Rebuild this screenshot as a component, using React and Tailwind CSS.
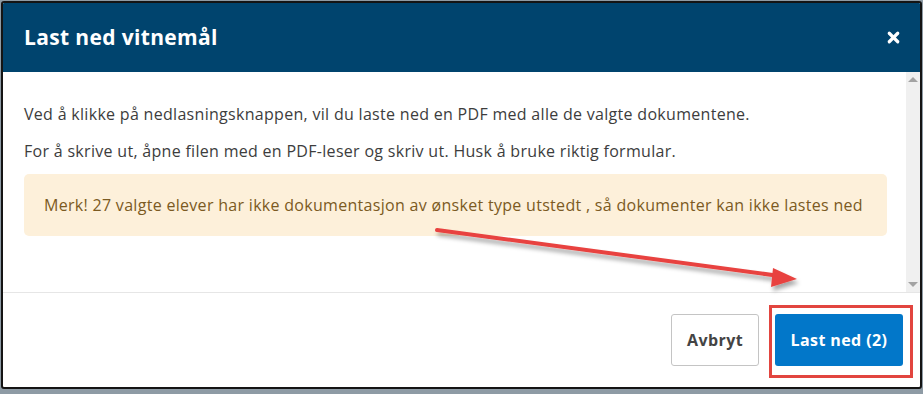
import { X } from 'lucide-react'

const font = { fontFamily: '"Open Sans", "Noto Sans", sans-serif' }

const Scrollbar = () => (
  <div className="w-[14px] bg-[#f0f0f0] flex flex-col justify-between items-center py-[5px]">
    <div className="w-0 h-0 border-l-[5px] border-r-[5px] border-b-[5px] border-l-transparent border-r-transparent border-b-[#a3a3a3]" />
    <div className="w-0 h-0 border-l-[5px] border-r-[5px] border-t-[5px] border-l-transparent border-r-transparent border-t-[#a3a3a3]" />
  </div>
)

export default function App() {
  return (
    <div className="relative w-[923px] h-[394px] bg-[#8e9ba5] overflow-hidden" style={font}>
      <div className="ml-px mt-px w-[921px] h-[388px] border-2 border-[#141414] rounded-[3px] bg-white flex flex-col overflow-hidden">
        {/* Header */}
        <div className="h-[69px] shrink-0 bg-[#00446e] flex items-center justify-between pl-[21px] pr-[18px]">
          <h2 className="text-[21px] tracking-[0.35px] font-bold text-white">Last ned vitnemål</h2>
          <X className="w-[17px] h-[17px] text-white" strokeWidth={4.5} />
        </div>

        {/* Body */}
        <div className="flex flex-1">
          <div className="flex-1 pl-[21px] pr-[19px] pt-[30px] text-[16px] tracking-[0.3px] leading-[24px] text-[#3d3d3d]">
            <p>Ved å klikke på nedlasningsknappen, vil du laste ned en PDF med alle de valgte dokumentene.</p>
            <p className="mt-[13px]">For å skrive ut, åpne filen med en PDF-leser og skriv ut. Husk å bruke riktig formular.</p>
            <div className="mt-[11px] bg-[#fdf0da] rounded-[5px] py-[19px] pl-[20px] text-[#7b5a22]">
              Merk! 27 valgte elever har ikke dokumentasjon av ønsket type utstedt , så dokumenter kan ikke lastes ned
            </div>
          </div>
          <Scrollbar />
        </div>

        {/* Footer */}
        <div className="h-[95px] shrink-0 border-t border-[#e6e6e6] flex items-center justify-end gap-4 pr-[17px]">
          <button className="w-[88px] h-[52px] rounded-[3px] border border-[#c4c4c4] bg-white text-[16px] tracking-[0.4px] font-bold text-[#444]">
            Avbryt
          </button>
          <button className="w-[128px] h-[52px] rounded-[3px] bg-[#0277c9] text-[16px] tracking-[0.4px] font-bold text-white">
            Last ned (2)
          </button>
        </div>
      </div>

      {/* Annotations */}
      <div className="absolute left-[769px] top-[305px] w-[144px] h-[73px] border-[3px] border-[#e2453f]" />
      <svg className="absolute left-0 top-0" width="923" height="394">
        <defs>
          <filter id="sh" x="-10%" y="-50%" width="120%" height="200%">
            <feDropShadow dx="2" dy="4" stdDeviation="2" floodColor="#000" floodOpacity="0.35" />
          </filter>
        </defs>
        <g filter="url(#sh)">
          <line x1="437" y1="230" x2="780" y2="276" stroke="#e8433f" strokeWidth="4" strokeLinecap="round" />
          <polygon points="797,279 773,268 771,287" fill="#e8433f" />
        </g>
      </svg>
    </div>
  )
}
